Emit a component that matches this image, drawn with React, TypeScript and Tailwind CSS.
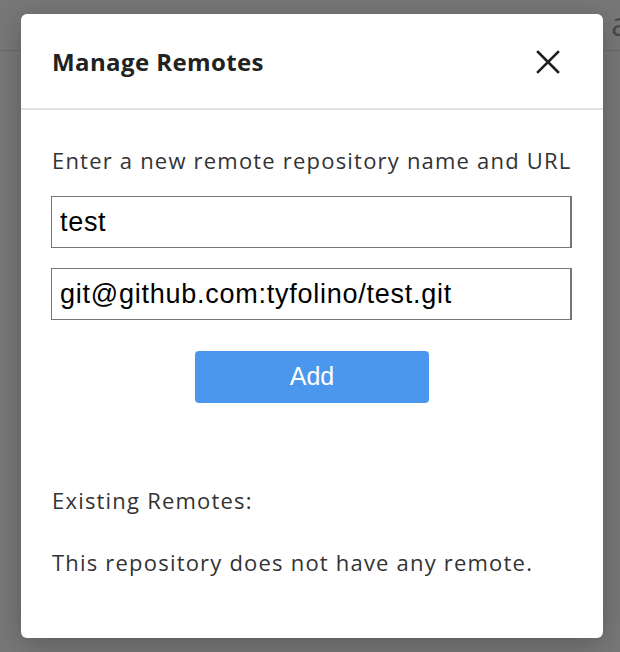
const bodyFont = "font-['Open_Sans','Noto_Sans',sans-serif]";
const inputFont = "font-['Liberation_Sans',Arial,sans-serif]";

function CloseIcon() {
  return (
    <svg width="24" height="24" viewBox="0 0 24 24" fill="none" stroke="#1f1f1f" strokeWidth="2.6" strokeLinecap="square">
      <path d="M2 2 L22 22 M22 2 L2 22" />
    </svg>
  );
}

export default function App() {
  return (
    <div className="relative w-[620px] h-[652px] overflow-hidden bg-[#787878]">
      {/* app behind the backdrop */}
      <div className="h-[51px] border-b border-[#6b6b6b] flex justify-end items-start">
        <span className="mt-[4px] mr-[-9px] text-[32px] leading-10 text-[#4a4a4a] font-['Open_Sans',sans-serif]">a</span>
      </div>

      {/* modal */}
      <div className="absolute inset-0 pl-[21px] pt-[14px]">
        <div className={`w-[582px] h-[624px] bg-white rounded-md shadow-[0_6px_30px_rgba(0,0,0,0.25)] flex flex-col ${bodyFont}`}>
          <div className="h-[96px] pt-[2px] pl-[31px] pr-[43px] flex items-center justify-between border-b-2 border-[#e1e1e1]">
            <h1 className="text-[24px] leading-8 font-bold text-[#222] tracking-[0.4px]">Manage Remotes</h1>
            <button className="w-6 h-6 flex items-center justify-center">
              <CloseIcon />
            </button>
          </div>

          <div className="px-[31px] pt-[35px] flex flex-col text-[#333]">
            <p className="text-[22px] leading-[30px] tracking-[1.2px]">Enter a new remote repository name and URL</p>
            <input
              defaultValue="test"
              className={`mt-[21px] h-[52px] w-[521px] -ml-px px-2 border border-r-2 border-[#767676] text-[27px] tracking-[0.7px] text-black outline-none ${inputFont}`}
            />
            <input
              defaultValue="git@github.com:tyfolino/test.git"
              className={`mt-5 h-[52px] w-[521px] -ml-px px-2 border border-r-2 border-[#767676] text-[27px] tracking-[0.75px] text-black outline-none ${inputFont}`}
            />
            <button
              className={`mt-[31px] self-center w-[234px] h-[52px] rounded bg-[#4a97ed] text-white text-[25px] ${inputFont}`}
            >
              Add
            </button>
            <p className="mt-[82px] text-[22px] leading-[30px] tracking-[1.2px]">Existing Remotes:</p>
            <p className="mt-[32px] text-[22px] leading-[30px] tracking-[1.2px]">This repository does not have any remote.</p>
          </div>
        </div>
      </div>
    </div>
  );
}
